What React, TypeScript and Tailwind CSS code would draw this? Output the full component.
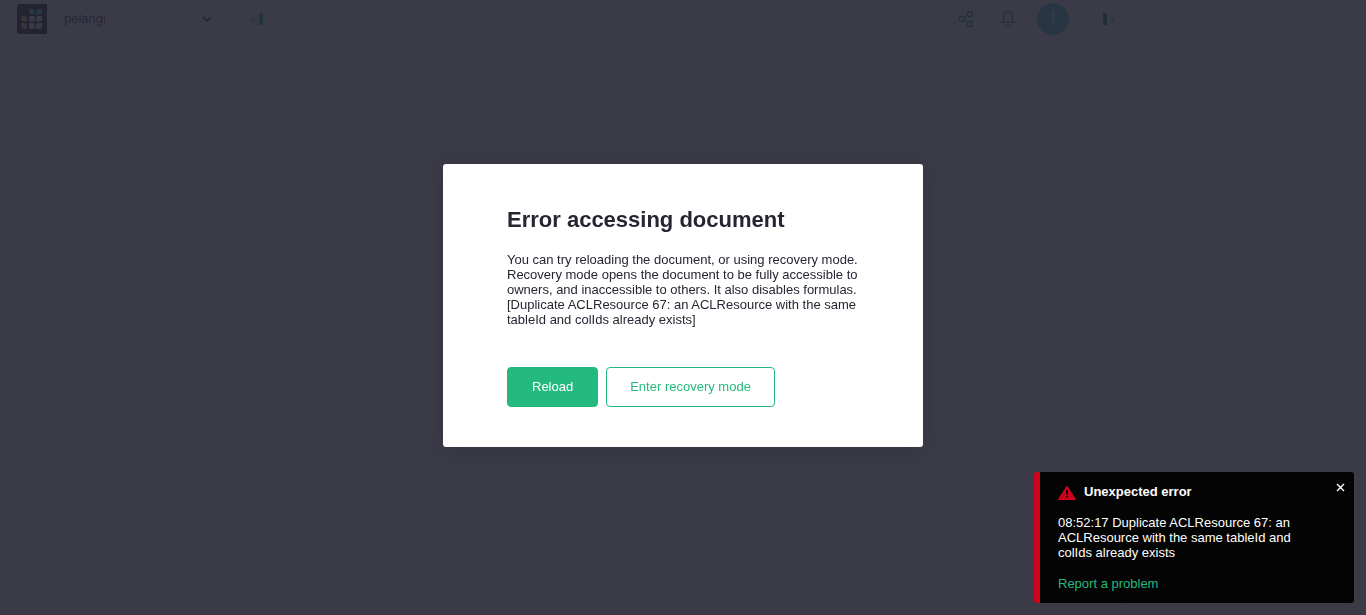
import React from "react";

function Logo() {
  return (
    <svg width="30" height="30" viewBox="0 0 30 30" aria-hidden="true">
      <path d="M3 0H30V30H3Q0 30 0 27V3Q0 0 3 0Z" fill="#16161f" />
      <g fill="#3fd0d8">
        <path d="M12 5h3.700q2 0 2 2v3.200h-3.200q-2.500 0-2.500-2.500z" />
        <path d="M25 5h-3.200q-2.800 0-2.800 2.800v2.400h3.200q2.800 0 2.800-2.800z" />
      </g>
      <g fill="#f0a868">
        <path d="M4.200 12h3.200q2.600 0 2.600 2.600v3h-3.200q-2.600 0-2.600-2.600z" />
        <path d="M4.200 19h3.200q2.600 0 2.600 2.600v3.200h-3.200q-2.600 0-2.600-2.600z" />
      </g>
      <g fill="#f4f4f4">
        <path d="M12 12h5.700v3q0 2.600-2.600 2.600h-.6q-2.500 0-2.500-2.600z" />
        <path d="M25 12h-3.200q-2.800 0-2.800 2.600v3h3.200q2.800 0 2.800-2.600z" />
        <path d="M12 19h3.200q2.500 0 2.500 2.600v3.200h-3.200q-2.500 0-2.500-2.600z" />
        <path d="M25 19h-3.200q-2.800 0-2.800 2.600v3.200h3.200q2.800 0 2.800-2.600z" />
      </g>
    </svg>
  );
}

function PanelIcon({ arrow }: { arrow: "left" | "right" }) {
  return arrow === "left" ? (
    <svg width="16" height="16" viewBox="0 0 16 16" fill="none" stroke="#16b378" aria-hidden="true">
      <rect x="10" y="2" width="4" height="12" rx="0.500" fill="#16b378" stroke="none" />
      <path d="M9 8H2.500M6 4.500L2.500 8 6 11.500" />
    </svg>
  ) : (
    <svg width="16" height="16" viewBox="0 0 16 16" fill="none" stroke="#16b378" aria-hidden="true">
      <rect x="2" y="2" width="4" height="12" rx="0.500" fill="#007548" stroke="none" />
      <path d="M7 8H13.500M10 4.500L13.500 8 10 11.500" />
    </svg>
  );
}

function TopBar() {
  return (
    <header className="flex h-11 shrink-0 items-center border-b border-[#d9d9d9] px-2 pb-[5px]">
      <button aria-label="Toggle left panel" className="mr-auto">
        <PanelIcon arrow="left" />
      </button>
      <button aria-label="Share" className="mr-6">
        <svg width="18" height="18" viewBox="0 0 18 18" fill="none" stroke="#009058" strokeWidth="1.200" aria-hidden="true">
          <circle cx="5" cy="9" r="2.600" />
          <circle cx="13" cy="4" r="2.600" />
          <circle cx="13" cy="14" r="2.600" />
          <path d="M7.200 7.700L10.800 5.300M7.200 10.300l3.600 2.400" />
        </svg>
      </button>
      <button aria-label="Notifications" className="mr-5">
        <svg width="18" height="18" viewBox="0 0 18 18" fill="none" stroke="#009058" strokeWidth="1.200" aria-hidden="true">
          <path d="M1 12.500H17M4.500 12.500V6.500q0-5 4.500-5t4.500 5v6M6.500 14.500q.5 2 2.500 2t2.500-2" />
        </svg>
      </button>
      <button className="mr-8 size-8 rounded-full bg-[#40c8d8] text-lg leading-8 text-white">I</button>
      <button aria-label="Toggle right panel">
        <PanelIcon arrow="right" />
      </button>
    </header>
  );
}

function Workspace() {
  return (
    <div className="flex min-h-screen bg-white">
      <aside className="w-60 shrink-0 bg-[#f7f7f7]">
        <div className="flex h-11 border-b border-[#d9d9d9] px-4 pt-1">
          <div className="ml-px flex h-[30px] flex-1 items-center rounded bg-white">
            <Logo />
            <button className="flex flex-1 items-center justify-between pl-[17px] pr-[9px] text-[13px] text-[#262633]">
              pelangi
              <svg width="16" height="16" viewBox="0 0 16 16" fill="none" stroke="#000" strokeWidth="1.400" aria-hidden="true">
                <path d="M4 6l4 4 4-4" />
              </svg>
            </button>
          </div>
        </div>
      </aside>
      <main className="flex min-w-0 flex-1 flex-col border-x border-[#d9d9d9]">
        <TopBar />
      </main>
      <aside className="w-60 shrink-0 bg-[#f7f7f7]" />
    </div>
  );
}

function ErrorDialog() {
  return (
    <div className="fixed inset-0 flex items-center justify-center bg-[#262633]/90 pb-1">
      <section
        role="dialog"
        aria-modal="true"
        aria-labelledby="dialog-title"
        className="w-[480px] rounded-[3px] bg-white px-16 py-10 text-[#262633] shadow-[0_2px_18px_0_rgba(31,37,50,0.31)]"
      >
        <h1 id="dialog-title" className="mb-4 text-[22px] font-bold leading-8">
          Error accessing document
        </h1>
        <p className="mb-10 text-[13px] leading-[15px]">
          You can try reloading the document, or using recovery mode. Recovery mode opens the document to be fully
          accessible to owners, and inaccessible to others. It also disables formulas. [Duplicate ACLResource 67: an
          ACLResource with the same tableId and colIds already exists]
        </p>
        <div className="flex gap-2 text-[13px]">
          <button className="h-10 rounded border border-[#24b97f] bg-[#24b97f] px-6 text-white">Reload</button>
          <button className="h-10 rounded border border-[#24b97f] px-[23px] text-[#24b97f]">Enter recovery mode</button>
        </div>
      </section>
    </div>
  );
}

function Toast() {
  return (
    <section
      role="alert"
      className="fixed bottom-3 right-3 w-80 rounded-[3px] border-l-[6px] border-[#d0021b] bg-[#040404] py-3 pl-[18px] pr-2 text-[13px] leading-[15px] text-white"
    >
      <div className="flex h-[15px] items-center">
        <svg className="mr-2 mt-0.5" width="18" height="16" viewBox="0 0 18 16" aria-hidden="true">
          <path d="M8.300 1.500q.7-1 1.400 0L17.800 14q.4 1-.6 1H.8q-1 0-.6-1z" fill="#d0021b" />
          <path d="M8 5h2l-.3 5H8.300zM8.200 11h1.600v1.600H8.200z" fill="#040404" />
        </svg>
        <h2 className="flex-1 font-bold">Unexpected error</h2>
        <button aria-label="Close" className="-mt-2">
          <svg width="11" height="11" viewBox="0 0 11 11" stroke="#fff" strokeWidth="1.400" aria-hidden="true">
            <path d="M2 2l7 7M9 2L2 9" />
          </svg>
        </button>
      </div>
      <p className="mb-4 mr-10 mt-4">
        08:52:17 Duplicate ACLResource 67: an ACLResource with the same tableId and colIds already exists
      </p>
      <a href="#report" className="block text-[#24b97f]">
        Report a problem
      </a>
    </section>
  );
}

export default function App() {
  return (
    <div className="font-['Liberation_Sans',Arial,sans-serif]">
      <Workspace />
      <ErrorDialog />
      <Toast />
    </div>
  );
}
